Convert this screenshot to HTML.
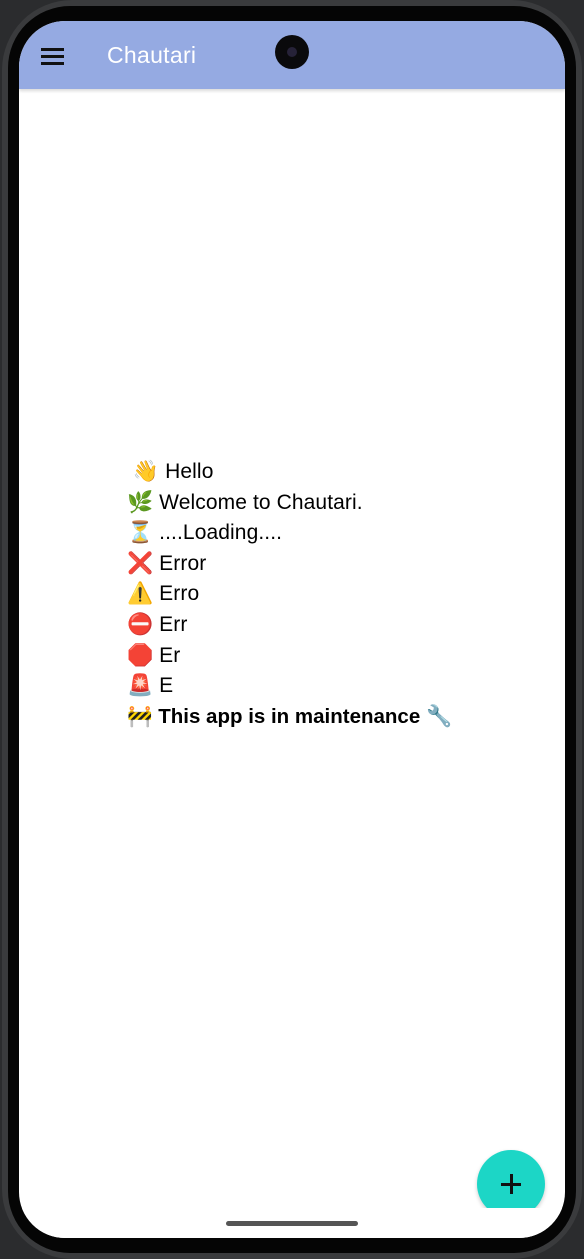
<!DOCTYPE html>
<html><head><meta charset="utf-8"><style>
html,body{margin:0;padding:0;}
body{width:584px;height:1259px;background:#2b2c2e;position:relative;overflow:hidden;font-family:"Liberation Sans","DejaVu Sans",sans-serif;}
.frame{position:absolute;left:2px;top:0;width:580px;height:1259px;border-radius:70px;background:#3a3b3d;}
.bezel{position:absolute;left:8px;top:6px;width:568px;height:1247px;border-radius:62px;background:#050505;}
.screen{position:absolute;left:19px;top:21px;width:546px;height:1217px;border-radius:46px;background:#fff;overflow:hidden;}
.bar{position:absolute;left:0;top:0;width:546px;height:68px;background:#95aae2;box-shadow:0 2px 3px rgba(0,0,0,.15);}
.ham{position:absolute;left:22px;top:27px;width:23px;}
.ham div{height:2.5px;background:#111;margin-bottom:4.5px;}
.title{position:absolute;left:88px;top:21px;color:#fff;font-size:23px;letter-spacing:0.3px;}
.cam{position:absolute;left:256px;top:14px;width:34px;height:34px;border-radius:50%;background:#0a0a0c;}
.cam::after{content:"";position:absolute;left:12px;top:12px;width:10px;height:10px;border-radius:50%;background:#262238;}
.txt{position:absolute;left:108px;top:436px;font-size:21px;line-height:30.6px;color:#000;letter-spacing:0.1px;}
.txt b{font-size:20.5px;letter-spacing:0;}
.fab{position:absolute;left:458px;top:1129px;width:68px;height:68px;border-radius:50%;background:#1cd6c6;box-shadow:0 2px 4px rgba(0,0,0,.2);}
.fab::before{content:"";position:absolute;left:24px;top:33px;width:20px;height:2.5px;background:#111;}
.fab::after{content:"";position:absolute;left:33px;top:24px;width:2.5px;height:20px;background:#111;}
.cut{position:absolute;left:0;top:1187px;width:546px;height:30px;background:#fff;}
.home{position:absolute;left:207px;top:1200px;width:132px;height:5px;border-radius:3px;background:#555;}
</style></head><body>
<div class="frame"></div><div class="bezel"></div>
<div class="screen">
<div class="bar"><div class="ham"><div></div><div></div><div></div></div><div class="title">Chautari</div></div>
<div class="cam"></div>
<div class="txt">
<div>&nbsp;👋 Hello</div>
<div>🌿 Welcome to Chautari.</div>
<div>⏳ ....Loading....</div>
<div>❌ Error</div>
<div>⚠️ Erro</div>
<div>⛔ Err</div>
<div>🛑 Er</div>
<div>🚨 E</div>
<div><b>🚧 This app is in maintenance</b> 🔧</div>
</div>
<div class="fab"></div>
<div class="cut"></div>
<div class="home"></div>
</div>
</body></html>
